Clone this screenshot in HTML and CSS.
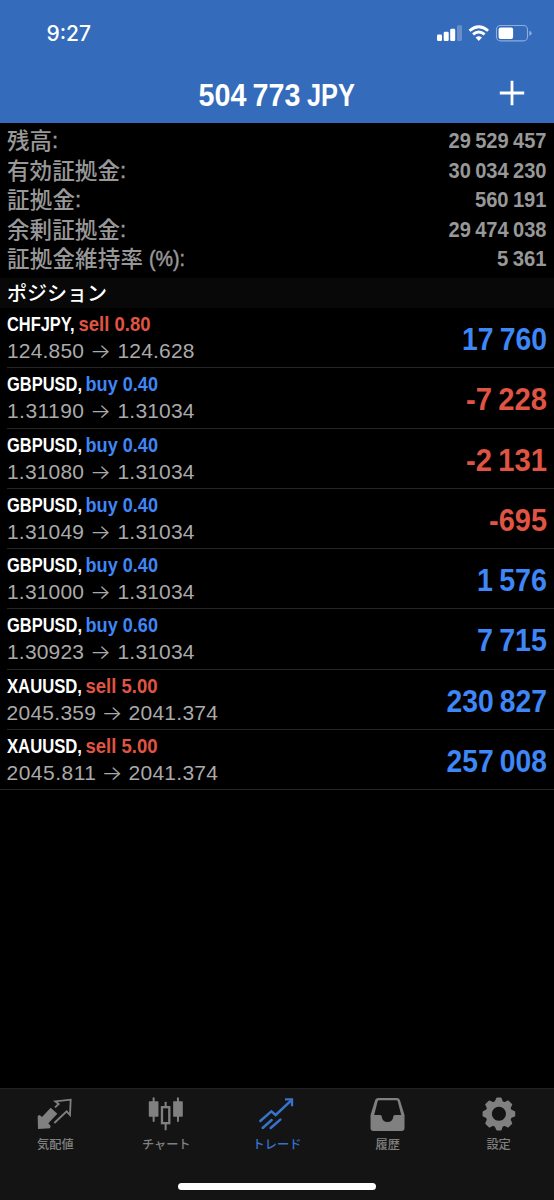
FILE: index.html
```html
<!DOCTYPE html>
<html lang="ja">
<head>
<meta charset="utf-8">
<title>トレード</title>
<link rel="stylesheet" href="styles.css">
</head>
<body>
<div class="app">
  <header class="header">
    <div class="status">
      <span class="clock">9:27</span>
      <svg class="indicators" viewBox="0 0 98 20">
        <rect x="0" y="12.6" width="5" height="6.4" rx="1.2"/>
        <rect x="6.7" y="9.8" width="5" height="9.2" rx="1.2"/>
        <rect x="13.2" y="6.7" width="5" height="12.3" rx="1.2"/>
        <rect class="dim" x="20" y="3.3" width="5" height="15.7" rx="1.2"/>
        <g class="wifi"><path d="M32.5 8.7Q41.8 0.7 51.1 8.7"/><path d="M36 12.4Q41.8 7.5 47.6 12.4"/></g>
        <path d="M38.6 15.6Q41.8 13 45 15.6L41.8 19Z"/>
        <rect class="case" x="59.5" y="3.5" width="31" height="15.4" rx="4"/>
        <rect x="61.6" y="5.6" width="14.5" height="11.3" rx="2"/>
        <path class="cap" d="M92.3 8.8Q94.7 9.5 94.7 11.2T92.3 13.7Z"/>
      </svg>
    </div>
    <div class="titlebar">
      <svg class="total" viewBox="0 0 160 40"><text x="0.5" y="28" textLength="102" lengthAdjust="spacingAndGlyphs">504 773</text><text x="109" y="28" textLength="48" lengthAdjust="spacingAndGlyphs">JPY</text></svg>
      <svg class="plus" viewBox="0 0 26 26"><path d="M13 .8V25.2M.8 13H25.2"/></svg>
    </div>
  </header>

  <section class="summary">
    <div class="line"><svg class="label" viewBox="0 0 240 29"><text x="7" y="22.6" textLength="45">残高</text><text x="52" y="22" class="latin">:</text></svg><svg class="amount" viewBox="0 0 110 29"><text x="11.5" y="22.3" textLength="98" lengthAdjust="spacingAndGlyphs">29 529 457</text></svg></div>
    <div class="line"><svg class="label" viewBox="0 0 240 29"><text x="7" y="22.6" textLength="113">有効証拠金</text><text x="120" y="22" class="latin">:</text></svg><svg class="amount" viewBox="0 0 110 29"><text x="11.5" y="22.3" textLength="98" lengthAdjust="spacingAndGlyphs">30 034 230</text></svg></div>
    <div class="line"><svg class="label" viewBox="0 0 240 29"><text x="7" y="22.6" textLength="68">証拠金</text><text x="75" y="22" class="latin">:</text></svg><svg class="amount" viewBox="0 0 110 29"><text x="38" y="22.3" textLength="71.500" lengthAdjust="spacingAndGlyphs">560 191</text></svg></div>
    <div class="line"><svg class="label" viewBox="0 0 240 29"><text x="7" y="22.6" textLength="113">余剰証拠金</text><text x="120" y="22" class="latin">:</text></svg><svg class="amount" viewBox="0 0 110 29"><text x="11.5" y="22.3" textLength="98" lengthAdjust="spacingAndGlyphs">29 474 038</text></svg></div>
    <div class="line"><svg class="label" viewBox="0 0 240 29"><text x="7" y="22.6" textLength="136">証拠金維持率</text><text x="149" y="22" class="latin" textLength="36" lengthAdjust="spacingAndGlyphs">(%):</text></svg><svg class="amount" viewBox="0 0 110 29"><text x="60" y="22.3" textLength="49.500" lengthAdjust="spacingAndGlyphs">5 361</text></svg></div>
  </section>

  <h2 class="section">ポジション</h2>

  <main class="positions">
    <div class="row"><svg class="deal" viewBox="0 0 240 60"><text class="sym" x="0" y="22.6" textLength="67.5" lengthAdjust="spacingAndGlyphs">CHFJPY,</text><text class="sell" x="71.5" y="22.6" textLength="72" lengthAdjust="spacingAndGlyphs">sell 0.80</text><text class="price" x="0" y="50.2" textLength="77">124.850</text><text class="arrow" x="83" y="50.2" textLength="21" lengthAdjust="spacingAndGlyphs">→</text><text class="price" x="110.5" y="50.2" textLength="77">124.628</text></svg><svg class="profit up" viewBox="0 0 110 60"><text x="25" y="42" textLength="85" lengthAdjust="spacingAndGlyphs">17 760</text></svg></div>
    <div class="row"><svg class="deal" viewBox="0 0 240 60"><text class="sym" x="0" y="22.6" textLength="75" lengthAdjust="spacingAndGlyphs">GBPUSD,</text><text class="buy" x="78.5" y="22.6" textLength="72.5" lengthAdjust="spacingAndGlyphs">buy 0.40</text><text class="price" x="0" y="50.2" textLength="77">1.31190</text><text class="arrow" x="83" y="50.2" textLength="21" lengthAdjust="spacingAndGlyphs">→</text><text class="price" x="110.5" y="50.2" textLength="77">1.31034</text></svg><svg class="profit down" viewBox="0 0 110 60"><text x="29" y="42" textLength="81" lengthAdjust="spacingAndGlyphs">-7 228</text></svg></div>
    <div class="row"><svg class="deal" viewBox="0 0 240 60"><text class="sym" x="0" y="22.6" textLength="75" lengthAdjust="spacingAndGlyphs">GBPUSD,</text><text class="buy" x="78.5" y="22.6" textLength="72.5" lengthAdjust="spacingAndGlyphs">buy 0.40</text><text class="price" x="0" y="50.2" textLength="77">1.31080</text><text class="arrow" x="83" y="50.2" textLength="21" lengthAdjust="spacingAndGlyphs">→</text><text class="price" x="110.5" y="50.2" textLength="77">1.31034</text></svg><svg class="profit down" viewBox="0 0 110 60"><text x="29" y="42" textLength="81" lengthAdjust="spacingAndGlyphs">-2 131</text></svg></div>
    <div class="row"><svg class="deal" viewBox="0 0 240 60"><text class="sym" x="0" y="22.6" textLength="75" lengthAdjust="spacingAndGlyphs">GBPUSD,</text><text class="buy" x="78.5" y="22.6" textLength="72.5" lengthAdjust="spacingAndGlyphs">buy 0.40</text><text class="price" x="0" y="50.2" textLength="77">1.31049</text><text class="arrow" x="83" y="50.2" textLength="21" lengthAdjust="spacingAndGlyphs">→</text><text class="price" x="110.5" y="50.2" textLength="77">1.31034</text></svg><svg class="profit down" viewBox="0 0 110 60"><text x="52" y="42" textLength="58" lengthAdjust="spacingAndGlyphs">-695</text></svg></div>
    <div class="row"><svg class="deal" viewBox="0 0 240 60"><text class="sym" x="0" y="22.6" textLength="75" lengthAdjust="spacingAndGlyphs">GBPUSD,</text><text class="buy" x="78.5" y="22.6" textLength="72.5" lengthAdjust="spacingAndGlyphs">buy 0.40</text><text class="price" x="0" y="50.2" textLength="77">1.31000</text><text class="arrow" x="83" y="50.2" textLength="21" lengthAdjust="spacingAndGlyphs">→</text><text class="price" x="110.5" y="50.2" textLength="77">1.31034</text></svg><svg class="profit up" viewBox="0 0 110 60"><text x="40" y="42" textLength="70" lengthAdjust="spacingAndGlyphs">1 576</text></svg></div>
    <div class="row"><svg class="deal" viewBox="0 0 240 60"><text class="sym" x="0" y="22.6" textLength="75" lengthAdjust="spacingAndGlyphs">GBPUSD,</text><text class="buy" x="78.5" y="22.6" textLength="72.5" lengthAdjust="spacingAndGlyphs">buy 0.60</text><text class="price" x="0" y="50.2" textLength="77">1.30923</text><text class="arrow" x="83" y="50.2" textLength="21" lengthAdjust="spacingAndGlyphs">→</text><text class="price" x="110.5" y="50.2" textLength="77">1.31034</text></svg><svg class="profit up" viewBox="0 0 110 60"><text x="40" y="42" textLength="70" lengthAdjust="spacingAndGlyphs">7 715</text></svg></div>
    <div class="row"><svg class="deal" viewBox="0 0 240 60"><text class="sym" x="0" y="22.6" textLength="75" lengthAdjust="spacingAndGlyphs">XAUUSD,</text><text class="sell" x="78.5" y="22.6" textLength="72" lengthAdjust="spacingAndGlyphs">sell 5.00</text><text class="price" x="-.5" y="50.2" textLength="89.5">2045.359</text><text class="arrow" x="94.5" y="50.2" textLength="21" lengthAdjust="spacingAndGlyphs">→</text><text class="price" x="121.5" y="50.2" textLength="89.5">2041.374</text></svg><svg class="profit up" viewBox="0 0 110 60"><text x="9.5" y="42" textLength="100.5" lengthAdjust="spacingAndGlyphs">230 827</text></svg></div>
    <div class="row last"><svg class="deal" viewBox="0 0 240 60"><text class="sym" x="0" y="22.6" textLength="75" lengthAdjust="spacingAndGlyphs">XAUUSD,</text><text class="sell" x="78.5" y="22.6" textLength="72" lengthAdjust="spacingAndGlyphs">sell 5.00</text><text class="price" x="-.5" y="50.2" textLength="89.5">2045.811</text><text class="arrow" x="94.5" y="50.2" textLength="21" lengthAdjust="spacingAndGlyphs">→</text><text class="price" x="121.5" y="50.2" textLength="89.5">2041.374</text></svg><svg class="profit up" viewBox="0 0 110 60"><text x="9.5" y="42" textLength="100.5" lengthAdjust="spacingAndGlyphs">257 008</text></svg></div>
  </main>

  <footer class="footer">
    <nav class="tabs">
      <div class="tab"><svg class="icon" viewBox="106 42 120 120"><path fill="currentColor" d="M153 83L173 101L146 130L153 138L151 145L115 147L114 108L120 105L127 111Z"/><path class="stroke3" d="M166 82L177 72L167 64L213 59L211 105L201 94L164 129"/></svg><span>気配値</span></div>
      <div class="tab"><svg class="icon" viewBox="438.6 42 120 120"><g fill="currentColor"><rect x="447" y="64" width="29" height="46" rx="2"/><rect x="458.500" y="52" width="6" height="74" rx="3"/><rect x="520" y="64" width="29" height="46" rx="2"/><rect x="531.500" y="52" width="6" height="74" rx="3"/><rect x="494.500" y="65" width="6" height="17" rx="2"/><rect x="494.500" y="130" width="6" height="21" rx="2"/></g><rect x="486.500" y="81.500" width="22" height="48" fill="none" stroke="currentColor" stroke-width="7"/></svg><span>チャート</span></div>
      <div class="tab active"><svg class="icon" viewBox="201 42 120 120"><path class="stroke7" d="M211 123L244 94L257 105L303 62M218 144L245 120M242 144L271 119"/><path class="stroke6" d="M285 58H306V79"/></svg><span>トレード</span></div>
      <div class="tab"><svg class="icon" viewBox="41.4 42 120 120"><path fill="currentColor" fill-rule="evenodd" d="M73 54H128Q135 54 137 60L151 105V144Q151 153 142 153H58Q49 153 49 144V105L63 60Q65 54 73 54ZM74 61Q71 61 70 65L60 105H78Q83 105 83 112Q85 126 100 126T117 112Q117 105 122 105H141L131 65Q130 61 127 61Z"/></svg><span>履歴</span></div>
      <div class="tab"><svg class="icon" viewBox="373.8 42 120 120"><path class="gear" fill-rule="evenodd" d="M428 55H439L443 66L451 69L461 64L471 74L466 84L469 91L480 96V107L469 112L466 119L471 130L461 140L451 135L443 138L439 149H428L423 138L415 135L405 140L395 130L400 119L397 112L387 107V96L397 91L400 84L395 74L405 64L415 69L423 66ZM433.500 78A23.500 23.500 0 1 0 433.510 78Z"/></svg><span>設定</span></div>
    </nav>
    <div class="home"></div>
  </footer>
</div>
</body>
</html>
```
FILE: styles.css
```css
* { box-sizing: border-box; }
body { margin: 0; background: #000; font-family: "Liberation Sans", "Noto Sans CJK JP", sans-serif; }
svg { display: block; overflow: visible; }
.app { width: 554px; height: 1200px; display: flex; flex-direction: column; background: #000; overflow: hidden; }

.header { height: 123px; background: #346bba; color: #fff; flex: none; }
.status { height: 66px; padding: 22px 19px 0 46.5px; display: flex; justify-content: space-between; }
.clock { font: 500 21px/24px Inter, sans-serif; }
.indicators { width: 98px; height: 20px; fill: #fff; }
.indicators .dim { opacity: .25; }
.indicators .wifi { fill: none; stroke: #fff; stroke-width: 2.8; }
.indicators .case { fill: none; stroke: #8daddb; stroke-width: 1.1; }
.indicators .cap { fill: #8daddb; }
.titlebar { height: 57px; padding: 12px 29px 0 198px; display: flex; justify-content: space-between; }
.total { width: 160px; height: 40px; fill: #fff; font-size: 31.5px; font-weight: 700; word-spacing: -.06em; }
.plus { width: 26px; height: 26px; margin-top: 2px; fill: none; stroke: #fff; stroke-width: 2.8; }

.summary { height: 155px; padding-top: 3px; flex: none; }
.line { height: 29.5px; padding-right: 7px; display: flex; justify-content: space-between; fill: #989898; }
.label { width: 240px; height: 29px; font: 500 22.5px "Noto Sans CJK JP", sans-serif; }
.latin { font: 400 22px "Liberation Sans", sans-serif; stroke: #989898; stroke-width: .5; }
.amount { width: 110px; height: 29px; font-size: 21.5px; font-weight: 700; word-spacing: -.06em; }

.section { margin: 0; height: 30px; padding-left: 7px; flex: none; background: #080808; color: #fff; font: 500 20px/30px "Noto Sans CJK JP", sans-serif; }

.positions { flex: 1; }
.row { height: 60.3px; margin-left: 7px; padding-right: 7px; display: flex; justify-content: space-between; border-bottom: 1px solid #262626; }
.row.last { margin-left: 0; padding-left: 7px; }
.deal { width: 240px; height: 60px; font-size: 21px; }
.sym, .sell, .buy { font-weight: 700; }
.sym { fill: #fff; }
.sell, .down { fill: #e05443; }
.buy, .up { fill: #3f86f7; }
.price { fill: #aaa; }
.arrow { fill: #aaa; font: 300 20px Inter, sans-serif; }
.profit { width: 110px; height: 60px; font-size: 31px; font-weight: 700; word-spacing: -.06em; }

.footer { height: 112px; flex: none; background: #141414; border-top: 1px solid #222; }
.tabs { height: 94px; display: flex; padding-top: 5px; }
.tab { flex: 1; display: flex; flex-direction: column; align-items: center; color: #808080; font: 500 12.2px/18px "Noto Sans CJK JP", sans-serif; }
.tab span { margin-top: 1px; }
.active { color: #3872ca; }
.icon { width: 40px; height: 40px; }
.stroke3 { fill: none; stroke: currentColor; stroke-width: 5.5; }
.stroke6 { fill: none; stroke: currentColor; stroke-width: 7; }
.stroke7 { fill: none; stroke: currentColor; stroke-width: 7.5; stroke-linecap: round; }
.gear { fill: currentColor; stroke: currentColor; stroke-width: 5; stroke-linejoin: round; }
.home { width: 198px; height: 7px; margin: 0 auto; border-radius: 4px; background: #fff; }
```
